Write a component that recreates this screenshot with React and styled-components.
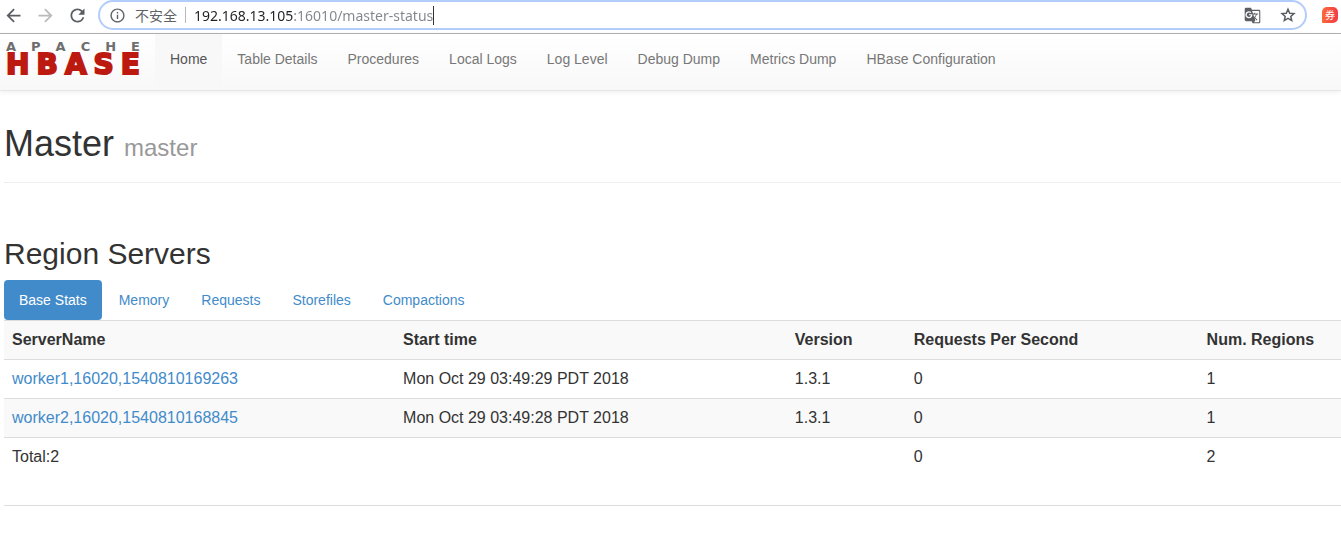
import React, { useState } from 'react'
import styled, { createGlobalStyle } from 'styled-components';
import { MdArrowBack, MdArrowForward, MdRefresh, MdInfoOutline, MdGTranslate } from 'react-icons/md'

const navLinks = ['Home', 'Table Details', 'Procedures', 'Local Logs', 'Log Level', 'Debug Dump', 'Metrics Dump', 'HBase Configuration']

const tabs = ['Base Stats', 'Memory', 'Requests', 'Storefiles', 'Compactions']

const servers = [
  { name: 'worker1,16020,1540810169263', start: 'Mon Oct 29 03:49:29 PDT 2018', version: '1.3.1', requests: 0, regions: 1 },
  { name: 'worker2,16020,1540810168845', start: 'Mon Oct 29 03:49:28 PDT 2018', version: '1.3.1', requests: 0, regions: 1 },
]

const StarIcon = () => (
  <svg width='16' height='16' viewBox='0 0 16 16' fill='none' stroke='currentColor' strokeWidth='1.5'>
    <path d='M8 2.2 9.7 6.2 14 6.6 10.8 9.4 11.7 13.6 8 11.4 4.3 13.6 5.2 9.4 2 6.6 6.3 6.2Z' />
  </svg>
)

const BrowserBar = () => {
  const [url, setUrl] = useState('192.168.13.105:16010/master-status')

  return (
    <Toolbar>
      <IconButton aria-label='Back'><MdArrowBack size={21} /></IconButton>
      <IconButton aria-label='Forward' $muted><MdArrowForward size={21} /></IconButton>
      <IconButton aria-label='Reload'><MdRefresh size={21} /></IconButton>
      <AddressBar>
        <SiteInfo><MdInfoOutline size={17} />不安全</SiteInfo>
        <UrlInput aria-label='Address' value={url} onChange={(e) => setUrl(e.target.value)} />
        <Caret />
        <AddressActions>
          <IconButton aria-label='Translate'><MdGTranslate size={17} /></IconButton>
          <IconButton aria-label='Bookmark'><StarIcon /></IconButton>
        </AddressActions>
      </AddressBar>
      <Extension aria-label='Coupons'>券</Extension>
    </Toolbar>
  )
}

const Navbar = () => (
  <Nav>
    <Brand href='#' aria-label='Apache HBase'>
      <BrandTop>{[...'APACHE'].map((c, i) => <span key={i}>{c}</span>)}</BrandTop>
      <BrandName>{[...'HBASE'].map((c, i) => <span key={i}>{c}</span>)}</BrandName>
    </Brand>
    <NavList>
      {navLinks.map((link, i) => (
        <li key={link}><NavLink href='#' $active={i === 0}>{link}</NavLink></li>
      ))}
    </NavList>
  </Nav>
)

const RegionServers = () => {
  const [active, setActive] = useState('Base Stats')

  return (
    <section>
      <Heading>Region Servers</Heading>
      <Tabs>
        {tabs.map((tab) => (
          <li key={tab}>
            <Tab href='#' $active={tab === active} onClick={() => setActive(tab)}>{tab}</Tab>
          </li>
        ))}
      </Tabs>
      <Table>
        <colgroup>
          <Col $width='29.25%' />
          <Col $width='29.3%' />
          <Col $width='8.9%' />
          <Col $width='21.9%' />
          <col />
        </colgroup>
        <tbody>
          <tr>
            <th>ServerName</th>
            <th>Start time</th>
            <th>Version</th>
            <th>Requests Per Second</th>
            <th>Num. Regions</th>
          </tr>
          {servers.map((s) => (
            <tr key={s.name}>
              <td><a href='#'>{s.name}</a></td>
              <td>{s.start}</td>
              <td>{s.version}</td>
              <td>{s.requests}</td>
              <td>{s.regions}</td>
            </tr>
          ))}
          <tr>
            <td>Total:{servers.length}</td>
            <td></td>
            <td></td>
            <td>0</td>
            <td>2</td>
          </tr>
        </tbody>
      </Table>
    </section>
  )
}

const App = () => {
  return (
    <>
      <GlobalStyle />
      <BrowserBar />
      <Navbar />
      <Container>
        <PageHeader>
          <h1>Master <small>master</small></h1>
        </PageHeader>
        <RegionServers />
        <Divider />
      </Container>
    </>
  )
};

const GlobalStyle = createGlobalStyle`
  * {
    box-sizing: border-box;
  }
  body {
    margin: 0;
    background: #fff;
    color: #333;
    font-family: "Liberation Sans", Arial, sans-serif;
    font-size: 14px;
    line-height: 20px;
  }
  a {
    color: #428bca;
    text-decoration: none;
  }
  ul {
    list-style: none;
    margin: 0;
    padding: 0;
  }
`;

const Toolbar = styled.header`
  display: flex;
  align-items: flex-start;
  gap: 8px;
  height: 34px;
  padding: 0 3px 0 1px;
  border-bottom: 1px solid #b3b3b3;
`;

const IconButton = styled.button`
  display: flex;
  flex: none;
  align-items: center;
  justify-content: center;
  width: 24px;
  height: 30px;
  padding: 0;
  border: none;
  background: none;
  color: ${({ $muted }) => ($muted ? '#bababa' : '#5a5d61')};
  cursor: pointer;
`;

const AddressBar = styled.div`
  display: flex;
  flex: 1;
  align-items: center;
  height: 30px;
  margin: 0 7px 0 1px;
  padding: 0 5px 0 9px;
  border: 2px solid #b3cdfb;
  border-radius: 15px;
`;

const SiteInfo = styled.div`
  display: flex;
  align-items: center;
  gap: 9px;
  height: 16px;
  padding-right: 8px;
  border-right: 1px solid #b5b7ba;
  color: #5f6368;
  font-family: "Noto Sans CJK SC", sans-serif;
  font-size: 14px;
`;

const UrlInput = styled.input`
  field-sizing: content;
  height: 24px;
  margin-left: 8px;
  padding: 0;
  border: none;
  outline: none;
  font-family: "Noto Sans", sans-serif;
  font-size: 14px;
  /* host is dark, port and path are grey */
  background: linear-gradient(90deg, #202124 100px, #80868b 100px);
  background-clip: text;
  color: transparent;
`;

const Caret = styled.span`
  width: 1px;
  height: 19px;
  background: #333;
`;

const AddressActions = styled.div`
  display: flex;
  gap: 12px;
  margin-left: auto;
`;

const Extension = styled.button`
  width: 16px;
  height: 16px;
  margin-top: 7px;
  padding: 0;
  border: none;
  border-radius: 5px 5px 5px 1px;
  background: linear-gradient(90deg, #fa6a35, #f23c4b);
  color: #fff;
  font-family: "Noto Sans CJK SC", sans-serif;
  font-size: 10px;
  line-height: 16px;
`;

const Nav = styled.nav`
  display: flex;
  height: 57px;
  border-bottom: 1px solid #e7e7e7;
  background: linear-gradient(#fff, #f8f8f8);
  box-shadow: 0 1px 5px rgba(0, 0, 0, 0.075);
`;

const Brand = styled.a`
  display: flex;
  flex-direction: column;
  width: 155px;
  padding: 6px 15px 0 6px;
  font-family: "DejaVu Sans", sans-serif;
  font-weight: bold;
`;

const BrandTop = styled.div`
  display: flex;
  justify-content: space-between;
  color: #6e6e6e;
  font-size: 13px;
  line-height: 13px;
`;

const BrandName = styled.div`
  display: flex;
  justify-content: space-between;
  color: #bc1a10;
  font-size: 28px;
  line-height: 24px;
  -webkit-text-stroke: 2px #bc1a10;
`;

const NavList = styled.ul`
  display: flex;
`;

const NavLink = styled.a`
  display: block;
  height: 56px;
  padding: 15px;
  background: ${({ $active }) => ($active ? '#f8f8f8' : 'none')};
  color: ${({ $active }) => ($active ? '#555' : '#777')};
`;

const Container = styled.main`
  padding-left: 4px;
`;

const PageHeader = styled.div`
  padding: 33px 0 18px;
  border-bottom: 1px solid #eee;

  h1 {
    margin: 0;
    font-size: 36px;
    font-weight: 500;
    line-height: 40px;
  }
  small {
    color: #999;
    font-size: 24px;
    font-weight: normal;
    line-height: 24px;
  }
`;

const Heading = styled.h2`
  margin: 54px 0 10px;
  font-size: 30px;
  font-weight: 500;
  line-height: 33px;
`;

const Tabs = styled.ul`
  display: flex;
  gap: 2px;
`;

const Tab = styled.a`
  display: block;
  padding: 10px 15px;
  border-radius: 4px;
  background: ${({ $active }) => ($active ? '#428bca' : 'transparent')};
  color: ${({ $active }) => ($active ? '#fff' : '#428bca')};
`;

const Table = styled.table`
  width: 100%;
  table-layout: fixed;
  border-collapse: collapse;
  font-size: 16px;
  line-height: 22px;

  th,
  td {
    padding: 8px;
    border-top: 1px solid #ddd;
    text-align: left;
  }
  tr:nth-child(odd) {
    background: #f9f9f9;
  }
  tr:last-child {
    background: #fff;
  }
`;

const Col = styled.col`
  width: ${({ $width }) => $width};
`;

const Divider = styled.hr`
  margin: 29px 0 0;
  border: none;
  border-top: 1px solid #ddd;
`;

export default App;
